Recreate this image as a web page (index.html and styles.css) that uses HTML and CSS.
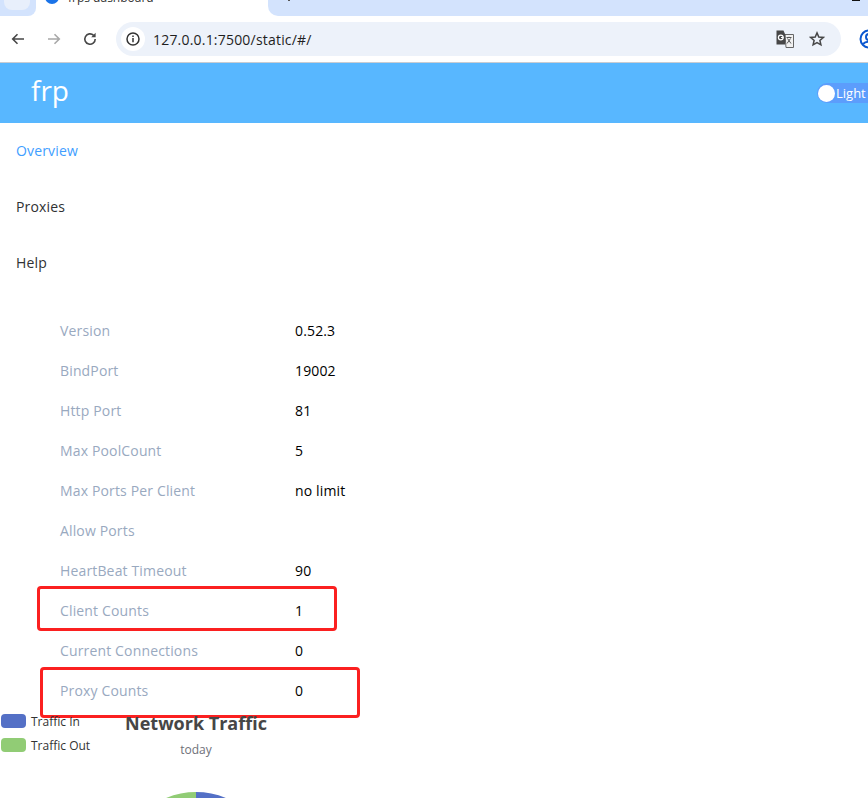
FILE: index.html
```html
<!DOCTYPE html>
<html lang="en">
<head>
<meta charset="utf-8">
<title>frps dashboard</title>
<link rel="stylesheet" href="styles.css">
</head>
<body>
<div class="tabstrip">
  <div class="tab-prev"><span class="tab-prev-hover"></span></div>
  <div class="tab-active">
    <span class="favicon"></span>
    <span class="tab-title">frps dashboard</span>
  </div>
  <div class="tab-next"><span class="tab-mark"></span><span class="tab-mark tab-mark-wide"></span></div>
</div>
<div class="toolbar">
  <svg class="nav-icon" viewBox="0 0 16 16"><path d="M14 8H3M7.500 3.200 2.700 8l4.800 4.800" fill="none" stroke="#474747" stroke-width="1.600"/></svg>
  <svg class="nav-icon" viewBox="0 0 16 16"><path d="M2 8h11M8.500 3.200 13.300 8l-4.800 4.800" fill="none" stroke="#a8a8a8" stroke-width="1.600"/></svg>
  <svg class="nav-icon" viewBox="0 0 16 16"><path d="M13.200 8a5.200 5.200 0 1 1-1.600-3.700" fill="none" stroke="#474747" stroke-width="1.600"/><path d="M13.600 1.800v4.400H9.200z" fill="#474747"/></svg>
  <div class="omnibox">
    <span class="site-info">
      <svg viewBox="0 0 16 16" class="info-icon"><circle cx="8" cy="8" r="6" fill="none" stroke="#333" stroke-width="1.500"/><path d="M8 7v4.200M8 4.600v1.500" stroke="#333" stroke-width="1.500"/></svg>
    </span>
    <span class="url">127.0.0.1:7500/static/#/</span>
    <svg class="translate" viewBox="0 0 18 18"><path d="M9 4.500h8.500v13H10z" fill="#f1f1f1" stroke="#666" stroke-width="1"/><path d="M0.500 0.500h7l1.700 4v10H0.500z" fill="#474747"/><circle cx="4.800" cy="7.500" r="2.400" fill="none" stroke="#fff" stroke-width="1.200"/><path d="M5 7.500h2.400" stroke="#fff" stroke-width="1"/><path d="M10.500 7.500h5M13 6.800v1M11.500 8.500l3.500 5M14.500 8.500l-3.500 5" stroke="#555" stroke-width="1"/></svg>
    <svg class="star" viewBox="0 0 16 16"><path d="M8 1.900 9.800 6l4.500.4-3.400 3 1 4.400L8 11.500l-3.900 2.300 1-4.400-3.400-3L6.200 6z" fill="none" stroke="#474747" stroke-width="1.500"/></svg>
  </div>
  <svg class="profile" viewBox="0 0 20 20"><circle cx="10" cy="10" r="8.500" fill="none" stroke="#0b57d0" stroke-width="2"/><circle cx="10" cy="8" r="3" fill="none" stroke="#0b57d0" stroke-width="2"/><path d="M4 15c3-3 9-3 13 0" fill="none" stroke="#0b57d0" stroke-width="2"/></svg>
</div>
<header class="app-header">
  <span class="logo">frp</span>
  <span class="theme-switch">
    <span class="switch-knob"></span>
    <span class="switch-label">Light</span>
  </span>
</header>
<nav class="menu">
  <a class="menu-item is-active">Overview</a>
  <a class="menu-item">Proxies</a>
  <a class="menu-item">Help</a>
</nav>
<main class="content">
  <dl class="info">
    <div class="row"><dt>Version</dt><dd>0.52.3</dd></div>
    <div class="row"><dt>BindPort</dt><dd>19002</dd></div>
    <div class="row"><dt>Http Port</dt><dd>81</dd></div>
    <div class="row"><dt>Max PoolCount</dt><dd>5</dd></div>
    <div class="row"><dt>Max Ports Per Client</dt><dd>no limit</dd></div>
    <div class="row"><dt>Allow Ports</dt><dd></dd></div>
    <div class="row"><dt>HeartBeat Timeout</dt><dd>90</dd></div>
    <div class="row"><dt>Client Counts</dt><dd>1</dd></div>
    <div class="row"><dt>Current Connections</dt><dd>0</dd></div>
    <div class="row"><dt>Proxy Counts</dt><dd>0</dd></div>
  </dl>
  <div class="highlight highlight-client"></div>
  <div class="highlight highlight-proxy"></div>
  <section class="chart">
    <ul class="legend">
      <li class="legend-item"><span class="swatch swatch-in"></span>Traffic In</li>
      <li class="legend-item"><span class="swatch swatch-out"></span>Traffic Out</li>
    </ul>
    <div class="chart-title">
      <h2>Network Traffic</h2>
      <p>today</p>
    </div>
    <svg class="pie" viewBox="0 0 156 6"><path d="M78 0A78 78 0 0 0 0 78H78z" fill="#91cc75"/><path d="M78 0A78 78 0 0 1 156 78H78z" fill="#5470c6"/></svg>
  </section>
</main>
</body>
</html>
```
FILE: styles.css
```css
* { box-sizing: border-box; }
html, body { margin: 0; padding: 0; }
body {
  width: 868px;
  height: 798px;
  overflow: hidden;
  position: relative;
  background: #fff;
  font-family: "Open Sans", "Noto Sans", sans-serif;
  font-size: 14px;
  color: #000;
}
.tabstrip {
  display: flex;
  height: 16px;
  background: #fff;
  overflow: hidden;
}
.tab-prev {
  width: 36px;
  height: 16px;
  background: #d3e3fd;
  border-radius: 0 0 8px 0;
  padding-left: 4px;
}
.tab-prev-hover {
  display: block;
  width: 26px;
  height: 10px;
  background: #e8effb;
  border-radius: 0 0 8px 8px;
}
.tab-active {
  width: 232px;
  height: 16px;
  background: #fff;
  display: flex;
  align-items: center;
  padding-left: 9px;
  gap: 9px;
}
.favicon {
  width: 14px;
  height: 14px;
  margin-top: -23px;
  border-radius: 50%;
  background: #1a73e8;
  flex: none;
}
.tab-title {
  font-size: 12px;
  line-height: 16px;
  margin-top: -21px;
  color: #333;
}
.tab-next {
  flex: 1;
  background: #d3e3fd;
  border-radius: 0 0 0 10px;
  display: flex;
  justify-content: space-between;
  padding: 0 8px 0 20px;
}
.tab-mark { width: 2px; height: 1px; background: #555; }
.tab-mark-wide { width: 8px; background: #111; }
.toolbar {
  height: 47px;
  display: flex;
  align-items: center;
  background: #fff;
  border-bottom: 1px solid #c8ccd2;
  padding-left: 10px;
}
.nav-icon { width: 16px; height: 16px; margin-right: 20px; flex: none; }
.omnibox {
  width: 725px;
  height: 34px;
  margin-left: -2px;
  border-radius: 17px;
  background: #edf2fa;
  display: flex;
  align-items: center;
  padding-left: 5px;
  flex: none;
}
.site-info {
  width: 24px;
  height: 24px;
  border-radius: 50%;
  background: #fff;
  display: flex;
  align-items: center;
  justify-content: center;
}
.info-icon { width: 16px; height: 16px; }
.url { margin-left: 8px; font-size: 14px; letter-spacing: 0.2px; color: #1f1f1f; flex: 1; }
.translate { width: 18px; height: 18px; margin-right: 15px; }
.star { width: 16px; height: 16px; margin-right: 16px; }
.profile { width: 20px; height: 20px; margin-left: 18px; flex: none; }
.app-header {
  height: 60px;
  background: #58b7ff;
  display: flex;
  align-items: center;
  justify-content: space-between;
  padding-left: 31px;
}
.logo { font-size: 28px; line-height: 60px; color: #fff; margin-top: -7px; }
.theme-switch {
  width: 51px;
  height: 20px;
  border-radius: 10px 0 0 10px;
  background: #5c9dfc;
  display: flex;
  align-items: center;
  padding-left: 1px;
  color: #fff;
}
.switch-knob {
  width: 17px;
  height: 17px;
  border-radius: 50%;
  background: #fff;
  flex: none;
}
.switch-label { font-size: 13px; margin-left: 1px; }
.menu { display: flex; flex-direction: column; }
.menu-item {
  height: 56px;
  line-height: 56px;
  padding-left: 16px;
  font-size: 14px;
  letter-spacing: 0.15px;
  color: #303133;
}
.menu-item.is-active { color: #409eff; }
.content { position: relative; padding-top: 20px; }
.info { margin: 0; padding-left: 60px; letter-spacing: 0.15px; }
.row { display: flex; height: 40px; line-height: 40px; }
.row dt { width: 235px; color: #99a9bf; }
.row dd { margin: 0; }
.highlight {
  position: absolute;
  border: 3px solid #fb2020;
  border-radius: 4px;
}
.highlight-client { left: 37px; top: 295px; width: 300px; height: 45px; }
.highlight-proxy { left: 40px; top: 376px; width: 320px; height: 51px; }
.chart { position: relative; height: 87px; }
.legend {
  position: absolute;
  left: 1px;
  top: -2px;
  margin: 0;
  padding: 0;
  list-style: none;
}
.legend-item {
  display: flex;
  align-items: center;
  height: 24px;
  font-size: 12px;
  color: #333;
  gap: 5px;
}
.swatch { width: 25px; height: 14px; border-radius: 4px; }
.swatch-in { background: #5470c6; }
.swatch-out { background: #91cc75; }
.chart-title {
  position: absolute;
  left: 96px;
  width: 200px;
  top: -1px;
  text-align: center;
}
.chart-title h2 { margin: 0 0 2px; font-size: 18px; line-height: 26px; font-weight: 700; color: #464646; }
.chart-title p { margin: 0; font-size: 12px; line-height: 24px; color: #6e7079; }
.pie {
  position: absolute;
  left: 118px;
  top: 81px;
  width: 156px;
  height: 6px;
}
```
